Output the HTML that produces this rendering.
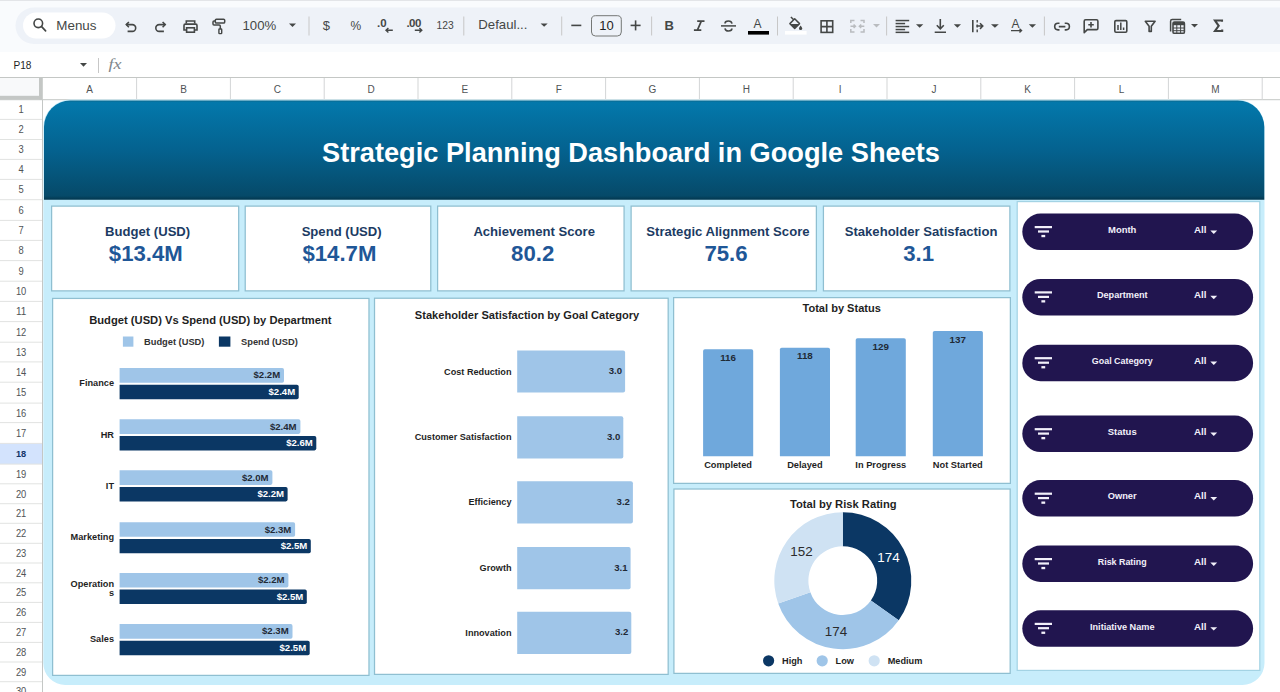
<!DOCTYPE html>
<html><head><meta charset="utf-8"><title>Strategic Planning Dashboard</title>
<style>
html,body{margin:0;padding:0;}
body{width:1280px;height:692px;overflow:hidden;position:relative;background:#ffffff;font-family:"Liberation Sans", sans-serif;}
.top{position:absolute;left:0;top:0;width:1280px;height:51.5px;background:#f9fbfd;}
.topline{position:absolute;left:0;top:0;width:1280px;height:1px;background:#e3e5e8;}
</style></head><body>
<div class="top"></div><div class="topline"></div>
<svg width="1280" height="52" style="position:absolute;left:0;top:0" font-family="Liberation Sans, sans-serif"><rect x="15.5" y="7.5" width="1300" height="36.5" rx="18.25" fill="#eef2f8"/><rect x="23" y="12.5" width="92.5" height="26" rx="13" fill="#ffffff"/><circle cx="38.3" cy="23.3" r="4.3" fill="none" stroke="#444746" stroke-width="1.6"/><line x1="41.4" y1="26.4" x2="45.6" y2="30.8" stroke="#444746" stroke-width="1.7" stroke-linecap="round"/><text x="56.3" y="30" font-size="13.4" fill="#444746">Menus</text><path d="M126.3 24.6 H132.3 A3.4 3.4 0 0 1 132.3 31.4 H127.6" fill="none" stroke="#444746" stroke-width="1.6"/><path d="M128.9 22 L126.3 24.6 L128.9 27.2" fill="none" stroke="#444746" stroke-width="1.6"/><path d="M165.2 24.6 H159.2 A3.4 3.4 0 0 0 159.2 31.4 H163.9" fill="none" stroke="#444746" stroke-width="1.6"/><path d="M162.6 22 L165.2 24.6 L162.6 27.2" fill="none" stroke="#444746" stroke-width="1.6"/><path d="M186.3 23.6 V21 H194.7 V23.6" fill="none" stroke="#444746" stroke-width="1.6"/><path d="M186 30 H184 V25.4 Q184 24.1 185.3 24.1 H195.7 Q197 24.1 197 25.4 V30 H195" fill="none" stroke="#444746" stroke-width="1.6"/><rect x="186.6" y="27.8" width="7.8" height="4.4" fill="none" stroke="#444746" stroke-width="1.6"/><rect x="215.3" y="19.2" width="9.4" height="3.9" rx="1.1" fill="none" stroke="#444746" stroke-width="1.5"/><path d="M215.3 21.1 H214 Q213 21.1 213 22.1 V23.9 Q213 24.9 214 24.9 H219.2 Q220.3 24.9 220.3 26 V28.9" fill="none" stroke="#444746" stroke-width="1.5"/><rect x="218.9" y="29" width="2.8" height="4.6" rx="0.6" fill="none" stroke="#444746" stroke-width="1.4"/><text x="242.5" y="30.3" font-size="13.2" fill="#444746">100%</text><polygon points="289,23.5 296,23.5 292.5,27" fill="#444746"/><rect x="308.5" y="16.5" width="1" height="19.0" fill="#c7c7c7"/><text x="322.8" y="29.6" font-size="13" fill="#444746">$</text><text x="350.5" y="29.8" font-size="12" fill="#444746">%</text><text x="377" y="27.3" font-size="11.5" font-weight="bold" fill="#444746">.0</text><path d="M392.8 30.3 H386 M388.4 28 L386 30.3 L388.4 32.6" fill="none" stroke="#444746" stroke-width="1.4"/><text x="406.5" y="27.3" font-size="11.5" font-weight="bold" fill="#444746" letter-spacing="-0.6">.00</text><path d="M414.8 30.3 H421.8 M419.4 28 L421.8 30.3 L419.4 32.6" fill="none" stroke="#444746" stroke-width="1.4"/><text x="436.5" y="28.8" font-size="10.3" fill="#444746">123</text><rect x="463.3" y="16.5" width="1" height="19.0" fill="#c7c7c7"/><text x="478.3" y="29.3" font-size="13.2" fill="#444746">Defaul...</text><polygon points="540.6,23.4 547.7,23.4 544.1500000000001,26.8" fill="#444746"/><rect x="561.2" y="16.5" width="1" height="19.0" fill="#c7c7c7"/><rect x="571.3" y="24.6" width="10" height="1.6" fill="#444746"/><rect x="591.5" y="15.7" width="29.8" height="20.3" rx="4" fill="none" stroke="#747775" stroke-width="1"/><text x="606.4" y="30" font-size="13" fill="#1f1f1f" text-anchor="middle">10</text><rect x="630.6" y="24.6" width="10" height="1.6" fill="#444746"/><rect x="634.8" y="20.4" width="1.6" height="10" fill="#444746"/><rect x="651.1" y="16.5" width="1" height="19.0" fill="#c7c7c7"/><text x="664.5" y="30.3" font-size="13" font-weight="bold" fill="#444746">B</text><path d="M697.2 21.2 H704.5 M693.9 30.1 H701.3 M701.3 21.2 L697.4 30.1" fill="none" stroke="#444746" stroke-width="1.7"/><path d="M721 25.9 H736" stroke="#444746" stroke-width="1.5"/><path d="M732 23.7 Q731.6 21 728.4 21 Q725 21 725 23.4 M725 28.3 Q725.4 31 728.4 31 Q731.9 31 731.9 28.6" fill="none" stroke="#444746" stroke-width="1.6"/><text x="753.6" y="28.4" font-size="12" fill="#444746">A</text><rect x="748" y="31" width="21" height="3.6" fill="#000000"/><rect x="777.0" y="16.5" width="1" height="19.0" fill="#c7c7c7"/><path d="M790.9 17 L793.2 19.3 M789.9 23.6 L794.7 18.8 L799.5 23.6 L794.7 28.4 Z" fill="none" stroke="#444746" stroke-width="1.5" stroke-linejoin="round"/><path d="M790.2 23.9 L799.2 23.9 L794.7 28.2 Z" fill="#444746"/><path d="M800.6 25.6 Q802.2 27.6 802.2 28.4 A1.6 1.6 0 0 1 799 28.4 Q799 27.6 800.6 25.6Z" fill="#444746"/><rect x="785" y="31" width="21.6" height="3.6" fill="#ffffff"/><rect x="821.1" y="20.8" width="11.6" height="11.6" fill="none" stroke="#444746" stroke-width="1.6"/><path d="M826.9 20.8 V32.4 M821.1 26.6 H832.7" stroke="#444746" stroke-width="1.6"/><path d="M850.8 23 V20.5 H854.5 M860.5 20.5 H864 V23 M850.8 29 V32 H854.5 M860.5 32 H864 V29" fill="none" stroke="#b9bcbf" stroke-width="1.5"/><path d="M850.5 26.2 H855.5 M853.6 24.4 L855.5 26.2 L853.6 28 M864.3 26.2 H859.3 M861.2 24.4 L859.3 26.2 L861.2 28" fill="none" stroke="#b9bcbf" stroke-width="1.4"/><polygon points="873,24 880,24 876.5,27.4" fill="#b9bcbf"/><rect x="886.1" y="16.5" width="1" height="19.0" fill="#c7c7c7"/><rect x="895.6" y="19.8" width="13.6" height="1.5" fill="#444746"/><rect x="895.6" y="22.8" width="9.5" height="1.5" fill="#444746"/><rect x="895.6" y="25.8" width="13.6" height="1.5" fill="#444746"/><rect x="895.6" y="28.8" width="9.5" height="1.5" fill="#444746"/><rect x="895.6" y="31.599999999999998" width="13.6" height="1.5" fill="#444746"/><polygon points="916,24.2 923.3,24.2 919.65,27.7" fill="#444746"/><path d="M940.3 19 V28.6 M936.8 25.3 L940.3 28.8 L943.8 25.3 M934.7 32.2 H946" fill="none" stroke="#444746" stroke-width="1.6"/><polygon points="953.8,24.2 961,24.2 957.4,27.7" fill="#444746"/><path d="M972.8 20 V32.3" stroke="#444746" stroke-width="1.6"/><path d="M977.2 20 V22.5 M977.2 24.5 V27.5 M977.2 29.5 V32.3" stroke="#444746" stroke-width="1.4"/><path d="M976.5 26.1 H982.8 M980 23.3 L982.8 26.1 L980 28.9" fill="none" stroke="#444746" stroke-width="1.5"/><polygon points="991,24.2 998.8,24.2 994.9,27.7" fill="#444746"/><text x="1011.5" y="28" font-size="12" fill="#444746">A</text><path d="M1011 30.6 H1021.5 M1019.5 28.8 L1021.5 30.6 L1019.5 32.4" fill="none" stroke="#444746" stroke-width="1.4"/><polygon points="1028.8,24.2 1036,24.2 1032.4,27.7" fill="#444746"/><rect x="1043.9" y="16.5" width="1" height="19.0" fill="#c7c7c7"/><path d="M1059.5 23.3 H1058 A3.3 3.3 0 0 0 1058 29.9 H1059.5 M1064.7 23.3 H1066.1 A3.3 3.3 0 0 1 1066.1 29.9 H1064.7 M1058.8 26.6 H1065.4" fill="none" stroke="#444746" stroke-width="1.6"/><path d="M1084.2 32.6 V21.2 Q1084.2 19.8 1085.6 19.8 H1096.5 Q1097.9 19.8 1097.9 21.2 V28.2 Q1097.9 29.6 1096.5 29.6 H1087.3 Z" fill="none" stroke="#444746" stroke-width="1.6" stroke-linejoin="round"/><path d="M1091 21.9 V27.4 M1088.3 24.7 H1093.8" stroke="#444746" stroke-width="1.6"/><rect x="1114.8" y="20.6" width="12" height="11.6" rx="1.2" fill="none" stroke="#444746" stroke-width="1.6"/><path d="M1118 30 V25 M1120.8 30 V22.6 M1123.6 30 V27.5" stroke="#444746" stroke-width="1.5"/><path d="M1145.3 21.3 H1155.1 L1151.3 26.2 V31.4 H1149.1 V26.2 Z" fill="none" stroke="#444746" stroke-width="1.6" stroke-linejoin="round"/><path d="M1170.6 31.5 V21.2 Q1170.6 19.6 1172.2 19.6 H1181.2" fill="none" stroke="#444746" stroke-width="1.5"/><rect x="1173" y="22" width="11.4" height="11.3" rx="1.4" fill="none" stroke="#444746" stroke-width="1.6"/><rect x="1173" y="22" width="11.4" height="3.2" fill="#444746"/><path d="M1173 28 H1184.4 M1173 30.7 H1184.4 M1176.8 25 V33.3 M1180.6 25 V33.3" stroke="#444746" stroke-width="1"/><polygon points="1191,24 1198,24 1194.5,27.4" fill="#444746"/><path d="M1222 21.8 V20.5 H1215 L1218.7 25.8 L1215 31 H1222.2 V29.6" fill="none" stroke="#444746" stroke-width="2.1" stroke-linejoin="miter"/></svg>
<svg width="1280" height="692" style="position:absolute;left:0;top:0" font-family="Liberation Sans, sans-serif"><text x="13.4" y="68.6" font-size="11.4" fill="#1f1f1f" textLength="18" lengthAdjust="spacingAndGlyphs">P18</text><polygon points="80,63 87,63 83.5,66.8" fill="#444746"/><rect x="98" y="58" width="1" height="15" fill="#c7c7c7"/><text x="108.6" y="69.2" font-size="15.5" font-style="italic" font-family="Liberation Serif, serif" fill="#80868b" textLength="13" lengthAdjust="spacingAndGlyphs">fx</text><rect x="0" y="77" width="1280" height="1" fill="#c4c7c5"/><rect x="0" y="99.2" width="1280" height="1" fill="#c4c7c5"/><rect x="0" y="78" width="39" height="18" fill="#f8f9fa"/><rect x="39" y="77.5" width="3.8" height="22" fill="#c4c7c5"/><rect x="0" y="95.8" width="42" height="3.8" fill="#c4c7c5"/><rect x="136.1" y="78" width="1" height="22" fill="#d3d5d6"/><text x="89.7" y="92.6" font-size="10" fill="#505356" text-anchor="middle">A</text><rect x="229.9" y="78" width="1" height="22" fill="#d3d5d6"/><text x="183.5" y="92.6" font-size="10" fill="#505356" text-anchor="middle">B</text><rect x="323.7" y="78" width="1" height="22" fill="#d3d5d6"/><text x="277.3" y="92.6" font-size="10" fill="#505356" text-anchor="middle">C</text><rect x="417.5" y="78" width="1" height="22" fill="#d3d5d6"/><text x="371.1" y="92.6" font-size="10" fill="#505356" text-anchor="middle">D</text><rect x="511.3" y="78" width="1" height="22" fill="#d3d5d6"/><text x="464.9" y="92.6" font-size="10" fill="#505356" text-anchor="middle">E</text><rect x="605.1" y="78" width="1" height="22" fill="#d3d5d6"/><text x="558.7" y="92.6" font-size="10" fill="#505356" text-anchor="middle">F</text><rect x="698.9" y="78" width="1" height="22" fill="#d3d5d6"/><text x="652.5" y="92.6" font-size="10" fill="#505356" text-anchor="middle">G</text><rect x="792.7" y="78" width="1" height="22" fill="#d3d5d6"/><text x="746.3" y="92.6" font-size="10" fill="#505356" text-anchor="middle">H</text><rect x="886.5" y="78" width="1" height="22" fill="#d3d5d6"/><text x="840.1" y="92.6" font-size="10" fill="#505356" text-anchor="middle">I</text><rect x="980.3" y="78" width="1" height="22" fill="#d3d5d6"/><text x="933.9" y="92.6" font-size="10" fill="#505356" text-anchor="middle">J</text><rect x="1074.1" y="78" width="1" height="22" fill="#d3d5d6"/><text x="1027.7" y="92.6" font-size="10" fill="#505356" text-anchor="middle">K</text><rect x="1167.9" y="78" width="1" height="22" fill="#d3d5d6"/><text x="1121.5" y="92.6" font-size="10" fill="#505356" text-anchor="middle">L</text><rect x="1261.7" y="78" width="1" height="22" fill="#d3d5d6"/><text x="1215.3" y="92.6" font-size="10" fill="#505356" text-anchor="middle">M</text><rect x="1355.5" y="78" width="1" height="22" fill="#d3d5d6"/><text x="1309.1" y="92.6" font-size="10" fill="#505356" text-anchor="middle">N</text><rect x="42" y="99.6" width="1" height="600" fill="#c4c7c5"/><rect x="0" y="118.9" width="42" height="1" fill="#e1e3e1"/><text x="18.5" y="113.2" font-size="10.4" fill="#505356" textLength="5.2" lengthAdjust="spacingAndGlyphs">1</text><rect x="0" y="139.0" width="42" height="1" fill="#e1e3e1"/><text x="18.5" y="133.2" font-size="10.4" fill="#505356" textLength="5.2" lengthAdjust="spacingAndGlyphs">2</text><rect x="0" y="158.9" width="42" height="1" fill="#e1e3e1"/><text x="18.5" y="153.2" font-size="10.4" fill="#505356" textLength="5.2" lengthAdjust="spacingAndGlyphs">3</text><rect x="0" y="178.9" width="42" height="1" fill="#e1e3e1"/><text x="18.5" y="173.2" font-size="10.4" fill="#505356" textLength="5.2" lengthAdjust="spacingAndGlyphs">4</text><rect x="0" y="199.2" width="42" height="1" fill="#e1e3e1"/><text x="18.5" y="193.4" font-size="10.4" fill="#505356" textLength="5.2" lengthAdjust="spacingAndGlyphs">5</text><rect x="0" y="219.9" width="42" height="1" fill="#e1e3e1"/><text x="18.5" y="213.9" font-size="10.4" fill="#505356" textLength="5.2" lengthAdjust="spacingAndGlyphs">6</text><rect x="0" y="239.9" width="42" height="1" fill="#e1e3e1"/><text x="18.5" y="234.2" font-size="10.4" fill="#505356" textLength="5.2" lengthAdjust="spacingAndGlyphs">7</text><rect x="0" y="260.1" width="42" height="1" fill="#e1e3e1"/><text x="18.5" y="254.3" font-size="10.4" fill="#505356" textLength="5.2" lengthAdjust="spacingAndGlyphs">8</text><rect x="0" y="280.7" width="42" height="1" fill="#e1e3e1"/><text x="18.5" y="274.7" font-size="10.4" fill="#505356" textLength="5.2" lengthAdjust="spacingAndGlyphs">9</text><rect x="0" y="300.9" width="42" height="1" fill="#e1e3e1"/><text x="15.9" y="295.1" font-size="10.4" fill="#505356" textLength="10.4" lengthAdjust="spacingAndGlyphs">10</text><rect x="0" y="321.1" width="42" height="1" fill="#e1e3e1"/><text x="15.9" y="315.3" font-size="10.4" fill="#505356" textLength="10.4" lengthAdjust="spacingAndGlyphs">11</text><rect x="0" y="341.7" width="42" height="1" fill="#e1e3e1"/><text x="15.9" y="335.7" font-size="10.4" fill="#505356" textLength="10.4" lengthAdjust="spacingAndGlyphs">12</text><rect x="0" y="361.4" width="42" height="1" fill="#e1e3e1"/><text x="15.9" y="355.8" font-size="10.4" fill="#505356" textLength="10.4" lengthAdjust="spacingAndGlyphs">13</text><rect x="0" y="381.7" width="42" height="1" fill="#e1e3e1"/><text x="15.9" y="375.8" font-size="10.4" fill="#505356" textLength="10.4" lengthAdjust="spacingAndGlyphs">14</text><rect x="0" y="402.6" width="42" height="1" fill="#e1e3e1"/><text x="15.9" y="396.4" font-size="10.4" fill="#505356" textLength="10.4" lengthAdjust="spacingAndGlyphs">15</text><rect x="0" y="422.1" width="42" height="1" fill="#e1e3e1"/><text x="15.9" y="416.7" font-size="10.4" fill="#505356" textLength="10.4" lengthAdjust="spacingAndGlyphs">16</text><rect x="0" y="442.9" width="42" height="1" fill="#e1e3e1"/><text x="15.9" y="436.8" font-size="10.4" fill="#505356" textLength="10.4" lengthAdjust="spacingAndGlyphs">17</text><rect x="0" y="443.9" width="42" height="20.2" fill="#d3e3fd"/><rect x="0" y="463.6" width="42" height="1" fill="#e1e3e1"/><text x="15.9" y="457.1" font-size="9.6" font-weight="bold" fill="#123468" textLength="10.2" lengthAdjust="spacingAndGlyphs">18</text><rect x="0" y="483.3" width="42" height="1" fill="#e1e3e1"/><text x="15.9" y="477.8" font-size="10.4" fill="#505356" textLength="10.4" lengthAdjust="spacingAndGlyphs">19</text><rect x="0" y="503.2" width="42" height="1" fill="#e1e3e1"/><text x="15.9" y="497.6" font-size="10.4" fill="#505356" textLength="10.4" lengthAdjust="spacingAndGlyphs">20</text><rect x="0" y="522.8" width="42" height="1" fill="#e1e3e1"/><text x="15.9" y="517.3" font-size="10.4" fill="#505356" textLength="10.4" lengthAdjust="spacingAndGlyphs">21</text><rect x="0" y="542.8" width="42" height="1" fill="#e1e3e1"/><text x="15.9" y="537.1" font-size="10.4" fill="#505356" textLength="10.4" lengthAdjust="spacingAndGlyphs">22</text><rect x="0" y="562.5" width="42" height="1" fill="#e1e3e1"/><text x="15.9" y="556.9" font-size="10.4" fill="#505356" textLength="10.4" lengthAdjust="spacingAndGlyphs">23</text><rect x="0" y="582.3" width="42" height="1" fill="#e1e3e1"/><text x="15.9" y="576.7" font-size="10.4" fill="#505356" textLength="10.4" lengthAdjust="spacingAndGlyphs">24</text><rect x="0" y="601.9" width="42" height="1" fill="#e1e3e1"/><text x="15.9" y="596.4" font-size="10.4" fill="#505356" textLength="10.4" lengthAdjust="spacingAndGlyphs">25</text><rect x="0" y="621.9" width="42" height="1" fill="#e1e3e1"/><text x="15.9" y="616.2" font-size="10.4" fill="#505356" textLength="10.4" lengthAdjust="spacingAndGlyphs">26</text><rect x="0" y="641.9" width="42" height="1" fill="#e1e3e1"/><text x="15.9" y="636.2" font-size="10.4" fill="#505356" textLength="10.4" lengthAdjust="spacingAndGlyphs">27</text><rect x="0" y="661.5" width="42" height="1" fill="#e1e3e1"/><text x="15.9" y="656.0" font-size="10.4" fill="#505356" textLength="10.4" lengthAdjust="spacingAndGlyphs">28</text><rect x="0" y="681.2" width="42" height="1" fill="#e1e3e1"/><text x="15.9" y="675.6" font-size="10.4" fill="#505356" textLength="10.4" lengthAdjust="spacingAndGlyphs">29</text><rect x="0" y="701.0" width="42" height="1" fill="#e1e3e1"/><text x="15.9" y="695.4" font-size="10.4" fill="#505356" textLength="10.4" lengthAdjust="spacingAndGlyphs">30</text></svg>
<svg width="1280" height="692" style="position:absolute;left:0;top:0" font-family="Liberation Sans, sans-serif"><path d="M43.3 127 A27.4 27.4 0 0 1 70.7 99.6 H1237.1 A27.4 27.4 0 0 1 1264.5 127 V663 A22 22 0 0 1 1242.5 685 H65.3 A22 22 0 0 1 43.3 663 Z" fill="#c7edfb"/><defs><linearGradient id="bg" x1="0" y1="0" x2="0" y2="1"><stop offset="0" stop-color="#0b6a90"/><stop offset="0.02" stop-color="#0378ab"/><stop offset="0.5" stop-color="#04628f"/><stop offset="0.96" stop-color="#064a69"/><stop offset="1" stop-color="#03364d"/></linearGradient></defs><path d="M44 199.8 V127 A26.4 26.4 0 0 1 70.4 100.6 H1237.9 A26.4 26.4 0 0 1 1264.3 127 V199.8 Z" fill="url(#bg)"/><text x="631" y="162" font-size="27.2" font-weight="bold" fill="#ffffff" text-anchor="middle">Strategic Planning Dashboard in Google Sheets</text><rect x="51.62" y="206.12" width="187.05" height="84.75" fill="#ffffff" stroke="#8fbfd1" stroke-width="1.25"/><text x="147.65" y="236.4" font-size="13.1" font-weight="bold" fill="#1c3b63" text-anchor="middle">Budget (USD)</text><text x="145.85" y="261.4" font-size="22.2" font-weight="bold" fill="#1f5797" text-anchor="middle">$13.4M</text><rect x="245.22" y="206.12" width="185.55" height="84.75" fill="#ffffff" stroke="#8fbfd1" stroke-width="1.25"/><text x="341.65" y="236.4" font-size="13.1" font-weight="bold" fill="#1c3b63" text-anchor="middle">Spend (USD)</text><text x="339.45" y="261.4" font-size="22.2" font-weight="bold" fill="#1f5797" text-anchor="middle">$14.7M</text><rect x="437.62" y="206.12" width="186.45" height="84.75" fill="#ffffff" stroke="#8fbfd1" stroke-width="1.25"/><text x="534.15" y="236.4" font-size="13.1" font-weight="bold" fill="#1c3b63" text-anchor="middle">Achievement Score</text><text x="532.70" y="261.4" font-size="22.2" font-weight="bold" fill="#1f5797" text-anchor="middle">80.2</text><rect x="631.12" y="206.12" width="185.25" height="84.75" fill="#ffffff" stroke="#8fbfd1" stroke-width="1.25"/><text x="727.90" y="236.4" font-size="13.1" font-weight="bold" fill="#1c3b63" text-anchor="middle">Strategic Alignment Score</text><text x="726.00" y="261.4" font-size="22.2" font-weight="bold" fill="#1f5797" text-anchor="middle">75.6</text><rect x="823.42" y="206.12" width="186.45" height="84.75" fill="#ffffff" stroke="#8fbfd1" stroke-width="1.25"/><text x="921.10" y="236.4" font-size="13.1" font-weight="bold" fill="#1c3b63" text-anchor="middle">Stakeholder Satisfaction</text><text x="918.55" y="261.4" font-size="22.2" font-weight="bold" fill="#1f5797" text-anchor="middle">3.1</text><rect x="52.62" y="298.43" width="316.35" height="376.95" fill="#ffffff" stroke="#8fbfd1" stroke-width="1.25"/><rect x="374.52" y="298.23" width="293.65" height="376.15" fill="#ffffff" stroke="#8fbfd1" stroke-width="1.25"/><rect x="673.62" y="297.62" width="336.75" height="185.75" fill="#ffffff" stroke="#8fbfd1" stroke-width="1.25"/><rect x="673.92" y="489.02" width="336.25" height="184.35" fill="#ffffff" stroke="#8fbfd1" stroke-width="1.25"/><rect x="1017.20" y="201.60" width="242.60" height="468.80" fill="#ffffff" stroke="#a3d3e4" stroke-width="1.2"/><text x="210.4" y="324" font-size="11.2" font-weight="bold" fill="#1f1f1f" text-anchor="middle">Budget (USD) Vs Spend (USD) by Department</text><rect x="122.9" y="336.5" width="10.5" height="10.2" fill="#9fc5e8"/><text x="144" y="344.8" font-size="9.3" font-weight="bold" fill="#333333">Budget (USD)</text><rect x="218.9" y="336.5" width="11.5" height="10.2" fill="#0b3764"/><text x="241" y="344.8" font-size="9.3" font-weight="bold" fill="#333333">Spend (USD)</text><path d="M119.6 368.1 H282.2 Q284.0 368.1 284.0 369.9 V380.9 Q284.0 382.7 282.2 382.7 H119.6 Z" fill="#9fc5e8"/><path d="M119.6 384.8 H296.9 Q298.7 384.8 298.7 386.6 V397.4 Q298.7 399.2 296.9 399.2 H119.6 Z" fill="#0b3764"/><text x="280.2" y="378.4" font-size="9.6" font-weight="bold" fill="#1f2a36" text-anchor="end">$2.2M</text><text x="295.2" y="395.1" font-size="9.6" font-weight="bold" fill="#ffffff" text-anchor="end">$2.4M</text><text x="114" y="386.3" font-size="9.2" font-weight="bold" fill="#1f1f1f" text-anchor="end">Finance</text><path d="M119.6 419.3 H298.6 Q300.4 419.3 300.4 421.1 V432.1 Q300.4 433.9 298.6 433.9 H119.6 Z" fill="#9fc5e8"/><path d="M119.6 436.0 H314.5 Q316.3 436.0 316.3 437.8 V448.6 Q316.3 450.4 314.5 450.4 H119.6 Z" fill="#0b3764"/><text x="296.6" y="429.6" font-size="9.6" font-weight="bold" fill="#1f2a36" text-anchor="end">$2.4M</text><text x="312.8" y="446.3" font-size="9.6" font-weight="bold" fill="#ffffff" text-anchor="end">$2.6M</text><text x="114" y="437.5" font-size="9.2" font-weight="bold" fill="#1f1f1f" text-anchor="end">HR</text><path d="M119.6 470.3 H270.6 Q272.4 470.3 272.4 472.1 V483.1 Q272.4 484.9 270.6 484.9 H119.6 Z" fill="#9fc5e8"/><path d="M119.6 487.0 H285.8 Q287.6 487.0 287.6 488.8 V499.6 Q287.6 501.4 285.8 501.4 H119.6 Z" fill="#0b3764"/><text x="268.6" y="480.6" font-size="9.6" font-weight="bold" fill="#1f2a36" text-anchor="end">$2.0M</text><text x="284.1" y="497.3" font-size="9.6" font-weight="bold" fill="#ffffff" text-anchor="end">$2.2M</text><text x="114" y="488.5" font-size="9.2" font-weight="bold" fill="#1f1f1f" text-anchor="end">IT</text><path d="M119.6 522.2 H293.3 Q295.1 522.2 295.1 524.0 V535.0 Q295.1 536.8 293.3 536.8 H119.6 Z" fill="#9fc5e8"/><path d="M119.6 538.9 H309.0 Q310.8 538.9 310.8 540.7 V551.5 Q310.8 553.3 309.0 553.3 H119.6 Z" fill="#0b3764"/><text x="291.3" y="532.5" font-size="9.6" font-weight="bold" fill="#1f2a36" text-anchor="end">$2.3M</text><text x="307.3" y="549.2" font-size="9.6" font-weight="bold" fill="#ffffff" text-anchor="end">$2.5M</text><text x="114" y="540.4" font-size="9.2" font-weight="bold" fill="#1f1f1f" text-anchor="end">Marketing</text><path d="M119.6 572.9 H286.6 Q288.4 572.9 288.4 574.7 V585.7 Q288.4 587.5 286.6 587.5 H119.6 Z" fill="#9fc5e8"/><path d="M119.6 589.6 H305.0 Q306.8 589.6 306.8 591.4 V602.2 Q306.8 604.0 305.0 604.0 H119.6 Z" fill="#0b3764"/><text x="284.6" y="583.2" font-size="9.6" font-weight="bold" fill="#1f2a36" text-anchor="end">$2.2M</text><text x="303.3" y="599.9" font-size="9.6" font-weight="bold" fill="#ffffff" text-anchor="end">$2.5M</text><text x="114" y="586.9" font-size="9.2" font-weight="bold" fill="#1f1f1f" text-anchor="end">Operation</text><text x="114" y="596.0" font-size="9.2" font-weight="bold" fill="#1f1f1f" text-anchor="end">s</text><path d="M119.6 624.1 H290.7 Q292.5 624.1 292.5 625.9 V636.9 Q292.5 638.7 290.7 638.7 H119.6 Z" fill="#9fc5e8"/><path d="M119.6 640.8 H307.9 Q309.7 640.8 309.7 642.6 V653.4 Q309.7 655.2 307.9 655.2 H119.6 Z" fill="#0b3764"/><text x="288.7" y="634.4" font-size="9.6" font-weight="bold" fill="#1f2a36" text-anchor="end">$2.3M</text><text x="306.2" y="651.1" font-size="9.6" font-weight="bold" fill="#ffffff" text-anchor="end">$2.5M</text><text x="114" y="642.3" font-size="9.2" font-weight="bold" fill="#1f1f1f" text-anchor="end">Sales</text><text x="527" y="319" font-size="11.1" font-weight="bold" fill="#1f1f1f" text-anchor="middle">Stakeholder Satisfaction by Goal Category</text><path d="M517.2 350.4 H623.1 Q625.1 350.4 625.1 352.4 V390.6 Q625.1 392.6 623.1 392.6 H517.2 Z" fill="#9fc5e8"/><text x="511.5" y="374.5" font-size="9.15" font-weight="bold" fill="#1f1f1f" text-anchor="end">Cost Reduction</text><text x="622.1" y="374.0" font-size="9.6" font-weight="bold" fill="#1f2a36" text-anchor="end">3.0</text><path d="M517.2 416.2 H621.3 Q623.3 416.2 623.3 418.2 V456.4 Q623.3 458.4 621.3 458.4 H517.2 Z" fill="#9fc5e8"/><text x="511.5" y="440.3" font-size="9.15" font-weight="bold" fill="#1f1f1f" text-anchor="end">Customer Satisfaction</text><text x="620.3" y="439.8" font-size="9.6" font-weight="bold" fill="#1f2a36" text-anchor="end">3.0</text><path d="M517.2 481.2 H630.9 Q632.9 481.2 632.9 483.2 V521.4 Q632.9 523.4 630.9 523.4 H517.2 Z" fill="#9fc5e8"/><text x="511.5" y="505.3" font-size="9.15" font-weight="bold" fill="#1f1f1f" text-anchor="end">Efficiency</text><text x="629.9" y="504.8" font-size="9.6" font-weight="bold" fill="#1f2a36" text-anchor="end">3.2</text><path d="M517.2 547.0 H628.6 Q630.6 547.0 630.6 549.0 V587.2 Q630.6 589.2 628.6 589.2 H517.2 Z" fill="#9fc5e8"/><text x="511.5" y="571.1" font-size="9.15" font-weight="bold" fill="#1f1f1f" text-anchor="end">Growth</text><text x="627.6" y="570.6" font-size="9.6" font-weight="bold" fill="#1f2a36" text-anchor="end">3.1</text><path d="M517.2 611.8 H629.3 Q631.3 611.8 631.3 613.8 V652.0 Q631.3 654.0 629.3 654.0 H517.2 Z" fill="#9fc5e8"/><text x="511.5" y="635.9" font-size="9.15" font-weight="bold" fill="#1f1f1f" text-anchor="end">Innovation</text><text x="628.3" y="635.4" font-size="9.6" font-weight="bold" fill="#1f2a36" text-anchor="end">3.2</text><text x="841.7" y="312.3" font-size="11.05" font-weight="bold" fill="#1f1f1f" text-anchor="middle">Total by Status</text><path d="M703.1 456.2 V351.0 Q703.1 349.2 704.9 349.2 H751.4 Q753.2 349.2 753.2 351.0 V456.2 Z" fill="#6fa8dc"/><text x="728.1" y="360.8" font-size="9.8" font-weight="bold" fill="#1f2a36" text-anchor="middle">116</text><text x="728.1" y="467.8" font-size="9.25" font-weight="bold" fill="#1f1f1f" text-anchor="middle">Completed</text><path d="M779.9 456.2 V349.6 Q779.9 347.8 781.7 347.8 H828.2 Q830.0 347.8 830.0 349.6 V456.2 Z" fill="#6fa8dc"/><text x="804.9" y="359.4" font-size="9.8" font-weight="bold" fill="#1f2a36" text-anchor="middle">118</text><text x="804.9" y="467.8" font-size="9.25" font-weight="bold" fill="#1f1f1f" text-anchor="middle">Delayed</text><path d="M855.7 456.2 V340.1 Q855.7 338.3 857.5 338.3 H904.0 Q905.8 338.3 905.8 340.1 V456.2 Z" fill="#6fa8dc"/><text x="880.8" y="349.9" font-size="9.8" font-weight="bold" fill="#1f2a36" text-anchor="middle">129</text><text x="880.8" y="467.8" font-size="9.25" font-weight="bold" fill="#1f1f1f" text-anchor="middle">In Progress</text><path d="M932.8 456.2 V332.8 Q932.8 331.0 934.6 331.0 H981.1 Q982.9 331.0 982.9 332.8 V456.2 Z" fill="#6fa8dc"/><text x="957.8" y="342.6" font-size="9.8" font-weight="bold" fill="#1f2a36" text-anchor="middle">137</text><text x="957.8" y="467.8" font-size="9.25" font-weight="bold" fill="#1f1f1f" text-anchor="middle">Not Started</text><text x="843.3" y="507.6" font-size="11.2" font-weight="bold" fill="#1f1f1f" text-anchor="middle">Total by Risk Rating</text><path d="M842.80 512.20 A68.5 68.5 0 0 1 898.72 620.26 L870.88 600.57 A34.4 34.4 0 0 0 842.80 546.30 Z" fill="#0b3764"/><path d="M898.72 620.26 A68.5 68.5 0 0 1 778.21 603.50 L810.36 592.15 A34.4 34.4 0 0 0 870.88 600.57 Z" fill="#9fc5e8"/><path d="M778.21 603.50 A68.5 68.5 0 0 1 842.80 512.20 L842.80 546.30 A34.4 34.4 0 0 0 810.36 592.15 Z" fill="#cfe2f3"/><text x="888.5" y="561.6" font-size="13.4" fill="#ffffff" text-anchor="middle">174</text><text x="801.5" y="556" font-size="13.4" fill="#2b2b2b" text-anchor="middle">152</text><text x="836" y="635.7" font-size="13.4" fill="#2b2b2b" text-anchor="middle">174</text><circle cx="768.6" cy="660.8" r="5.6" fill="#0b3764"/><text x="782" y="664.2" font-size="9.2" font-weight="bold" fill="#1f1f1f">High</text><circle cx="822.2" cy="660.8" r="5.6" fill="#9fc5e8"/><text x="835.6" y="664.2" font-size="9.2" font-weight="bold" fill="#1f1f1f">Low</text><circle cx="874.2" cy="660.8" r="5.6" fill="#cfe2f3"/><text x="887.7" y="664.2" font-size="9.2" font-weight="bold" fill="#1f1f1f">Medium</text><rect x="1022.3" y="213.6" width="230.8" height="36.5" rx="18.25" fill="#21154f"/><rect x="1034.7" y="226.0" width="17.3" height="2.2" fill="#f2f0fa"/><rect x="1038" y="230.4" width="11" height="2.2" fill="#f2f0fa"/><rect x="1041.4" y="234.9" width="3.8" height="2.3" fill="#f2f0fa"/><text x="1108.0" y="232.8" font-size="9.4" font-weight="bold" fill="#f2f0fa" textLength="28.4" lengthAdjust="spacingAndGlyphs">Month</text><text x="1194.0" y="232.8" font-size="9.8" font-weight="bold" fill="#f2f0fa">All</text><polygon points="1210.3,230.5 1217.2,230.5 1213.75,233.9" fill="#f2f0fa"/><rect x="1022.3" y="278.9" width="230.8" height="36.5" rx="18.25" fill="#21154f"/><rect x="1034.7" y="291.3" width="17.3" height="2.2" fill="#f2f0fa"/><rect x="1038" y="295.8" width="11" height="2.2" fill="#f2f0fa"/><rect x="1041.4" y="300.2" width="3.8" height="2.3" fill="#f2f0fa"/><text x="1096.9" y="298.1" font-size="9.4" font-weight="bold" fill="#f2f0fa" textLength="50.7" lengthAdjust="spacingAndGlyphs">Department</text><text x="1194.0" y="298.1" font-size="9.8" font-weight="bold" fill="#f2f0fa">All</text><polygon points="1210.3,295.8 1217.2,295.8 1213.75,299.2" fill="#f2f0fa"/><rect x="1022.3" y="344.7" width="230.8" height="36.5" rx="18.25" fill="#21154f"/><rect x="1034.7" y="357.1" width="17.3" height="2.2" fill="#f2f0fa"/><rect x="1038" y="361.6" width="11" height="2.2" fill="#f2f0fa"/><rect x="1041.4" y="366.1" width="3.8" height="2.3" fill="#f2f0fa"/><text x="1091.8" y="363.9" font-size="9.4" font-weight="bold" fill="#f2f0fa" textLength="60.9" lengthAdjust="spacingAndGlyphs">Goal Category</text><text x="1194.0" y="363.9" font-size="9.8" font-weight="bold" fill="#f2f0fa">All</text><polygon points="1210.3,361.6 1217.2,361.6 1213.75,365.1" fill="#f2f0fa"/><rect x="1022.3" y="415.6" width="230.8" height="36.5" rx="18.25" fill="#21154f"/><rect x="1034.7" y="428.1" width="17.3" height="2.2" fill="#f2f0fa"/><rect x="1038" y="432.5" width="11" height="2.2" fill="#f2f0fa"/><rect x="1041.4" y="437.0" width="3.8" height="2.3" fill="#f2f0fa"/><text x="1107.7" y="434.9" font-size="9.4" font-weight="bold" fill="#f2f0fa" textLength="29.0" lengthAdjust="spacingAndGlyphs">Status</text><text x="1194.0" y="434.9" font-size="9.8" font-weight="bold" fill="#f2f0fa">All</text><polygon points="1210.3,432.6 1217.2,432.6 1213.75,436.0" fill="#f2f0fa"/><rect x="1022.3" y="480.1" width="230.8" height="36.5" rx="18.25" fill="#21154f"/><rect x="1034.7" y="492.6" width="17.3" height="2.2" fill="#f2f0fa"/><rect x="1038" y="497.0" width="11" height="2.2" fill="#f2f0fa"/><rect x="1041.4" y="501.5" width="3.8" height="2.3" fill="#f2f0fa"/><text x="1107.7" y="499.4" font-size="9.4" font-weight="bold" fill="#f2f0fa" textLength="29.0" lengthAdjust="spacingAndGlyphs">Owner</text><text x="1194.0" y="499.4" font-size="9.8" font-weight="bold" fill="#f2f0fa">All</text><polygon points="1210.3,497.1 1217.2,497.1 1213.75,500.5" fill="#f2f0fa"/><rect x="1022.3" y="545.5" width="230.8" height="36.5" rx="18.25" fill="#21154f"/><rect x="1034.7" y="558.0" width="17.3" height="2.2" fill="#f2f0fa"/><rect x="1038" y="562.4" width="11" height="2.2" fill="#f2f0fa"/><rect x="1041.4" y="566.9" width="3.8" height="2.3" fill="#f2f0fa"/><text x="1097.8" y="564.8" font-size="9.4" font-weight="bold" fill="#f2f0fa" textLength="48.8" lengthAdjust="spacingAndGlyphs">Risk Rating</text><text x="1194.0" y="564.8" font-size="9.8" font-weight="bold" fill="#f2f0fa">All</text><polygon points="1210.3,562.5 1217.2,562.5 1213.75,565.9" fill="#f2f0fa"/><rect x="1022.3" y="610.3" width="230.8" height="36.5" rx="18.25" fill="#21154f"/><rect x="1034.7" y="622.8" width="17.3" height="2.2" fill="#f2f0fa"/><rect x="1038" y="627.1" width="11" height="2.2" fill="#f2f0fa"/><rect x="1041.4" y="631.6" width="3.8" height="2.3" fill="#f2f0fa"/><text x="1090.0" y="629.5" font-size="9.4" font-weight="bold" fill="#f2f0fa" textLength="64.5" lengthAdjust="spacingAndGlyphs">Initiative Name</text><text x="1194.0" y="629.5" font-size="9.8" font-weight="bold" fill="#f2f0fa">All</text><polygon points="1210.3,627.2 1217.2,627.2 1213.75,630.6" fill="#f2f0fa"/></svg>
</body></html>
